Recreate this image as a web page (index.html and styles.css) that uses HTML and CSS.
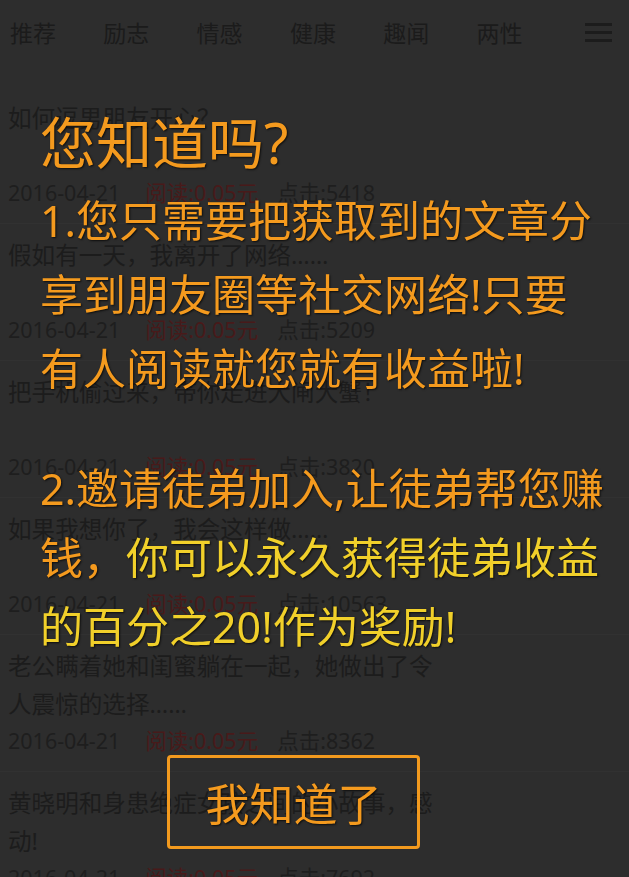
FILE: index.html
```html
<!DOCTYPE html>
<html>
<head>
    <meta charset="utf-8">
    <title>文章列表</title>
    <link rel="stylesheet" href="styles.css">
</head>
<body>
    <div class="nav">
        <a class="tab">推荐</a>
        <a class="tab">励志</a>
        <a class="tab">情感</a>
        <a class="tab">健康</a>
        <a class="tab">趣闻</a>
        <a class="tab">两性</a>
        <div class="menu"><span></span><span></span><span></span></div>
    </div>

    <ul class="article-list">
        <li class="article">
            <div class="title">如何逗男朋友开心？</div>
            <div class="meta"><span class="date">2016-04-21</span><span class="price">阅读:0.05元</span><span class="hits">点击:5418</span></div>
        </li>
        <li class="article">
            <div class="title">假如有一天，我离开了网络……</div>
            <div class="meta"><span class="date">2016-04-21</span><span class="price">阅读:0.05元</span><span class="hits">点击:5209</span></div>
        </li>
        <li class="article">
            <div class="title">把手机偷过来，带你走进大闸大蟹！</div>
            <div class="meta"><span class="date">2016-04-21</span><span class="price">阅读:0.05元</span><span class="hits">点击:3820</span></div>
        </li>
        <li class="article">
            <div class="title">如果我想你了，我会这样做……</div>
            <div class="meta"><span class="date">2016-04-21</span><span class="price">阅读:0.05元</span><span class="hits">点击:10563</span></div>
        </li>
        <li class="article">
            <div class="title">老公瞒着她和闺蜜躺在一起，她做出了令人震惊的选择……</div>
            <div class="meta"><span class="date">2016-04-21</span><span class="price">阅读:0.05元</span><span class="hits">点击:8362</span></div>
        </li>
        <li class="article">
            <div class="title">黄晓明和身患绝症女孩之间的小故事，感动!</div>
            <div class="meta"><span class="date">2016-04-21</span><span class="price">阅读:0.05元</span><span class="hits">点击:7692</span></div>
        </li>
    </ul>

    <div class="mask">
        <div class="tips">
            <h2>您知道吗?</h2>
            <p class="step">1.您只需要把获取到的文章分享到朋友圈等社交网络!只要有人阅读就您就有收益啦!</p>
            <p class="step step-2">2.邀请徒弟加入,让徒弟帮您赚钱，<span class="hl">你可以永久获得徒弟收益的百分之20!作为奖励!</span></p>
            <button class="btn-ok">我知道了</button>
        </div>
    </div>
</body>
</html>
```

FILE: styles.css
```css
body {
    margin: 0;
    padding: 0;
    font-family: "Noto Sans", "Noto Sans CJK SC", sans-serif;
    background: #2d2d2d;
    overflow: hidden;
}

.nav {
    display: flex;
    align-items: center;
    height: 64px;
    padding-left: 10px;
}

.nav .tab {
    width: 93.3px;
    font-size: 23px;
    color: #1b1b1b;
}

.menu {
    margin-left: auto;
    margin-right: 17px;
    display: flex;
    flex-direction: column;
    gap: 5px;
}

.menu span {
    display: block;
    width: 27px;
    height: 3px;
    background: #1c1c1c;
}

.article-list {
    list-style: none;
    margin: 23px 0 0;
    padding: 0;
}

.article {
    padding: 12px 8px;
    border-bottom: 1px solid #313131;
}

.article .title {
    width: 438px;
    height: 76px;
    font-size: 23.6px;
    line-height: 38px;
    color: #1c1c1c;
}

.article .meta {
    font-size: 21.5px;
    line-height: 36px;
    color: #1e1e1e;
}

.meta .date {
    margin-right: 25px;
}

.meta .price {
    margin-right: 19px;
    color: #481a1a;
}

.mask {
    position: fixed;
    top: 0;
    left: 0;
    right: 0;
    bottom: 0;
}

.tips {
    padding: 102px 20px 0 40px;
    color: #f49a1e;
    text-shadow: 1px 1px 2px rgba(0, 0, 0, 0.7);
}

.tips h2 {
    margin: 0;
    font-size: 56px;
    font-weight: normal;
    line-height: 80px;
}

.step {
    margin: 2px 0 0;
    font-size: 43px;
    line-height: 74px;
}

.step-2 {
    margin-top: 48px;
    line-height: 69px;
}

.hl {
    color: #f1d02a;
}

.btn-ok {
    display: block;
    margin: 94px 0 0 127px;
    width: 253px;
    height: 94px;
    border: 3px solid #f39a1e;
    border-radius: 4px;
    background: transparent;
    color: #f49a1e;
    font-family: "Noto Sans CJK SC", sans-serif;
    font-size: 44px;
    text-shadow: 1px 1px 2px rgba(0, 0, 0, 0.7);
}
```
